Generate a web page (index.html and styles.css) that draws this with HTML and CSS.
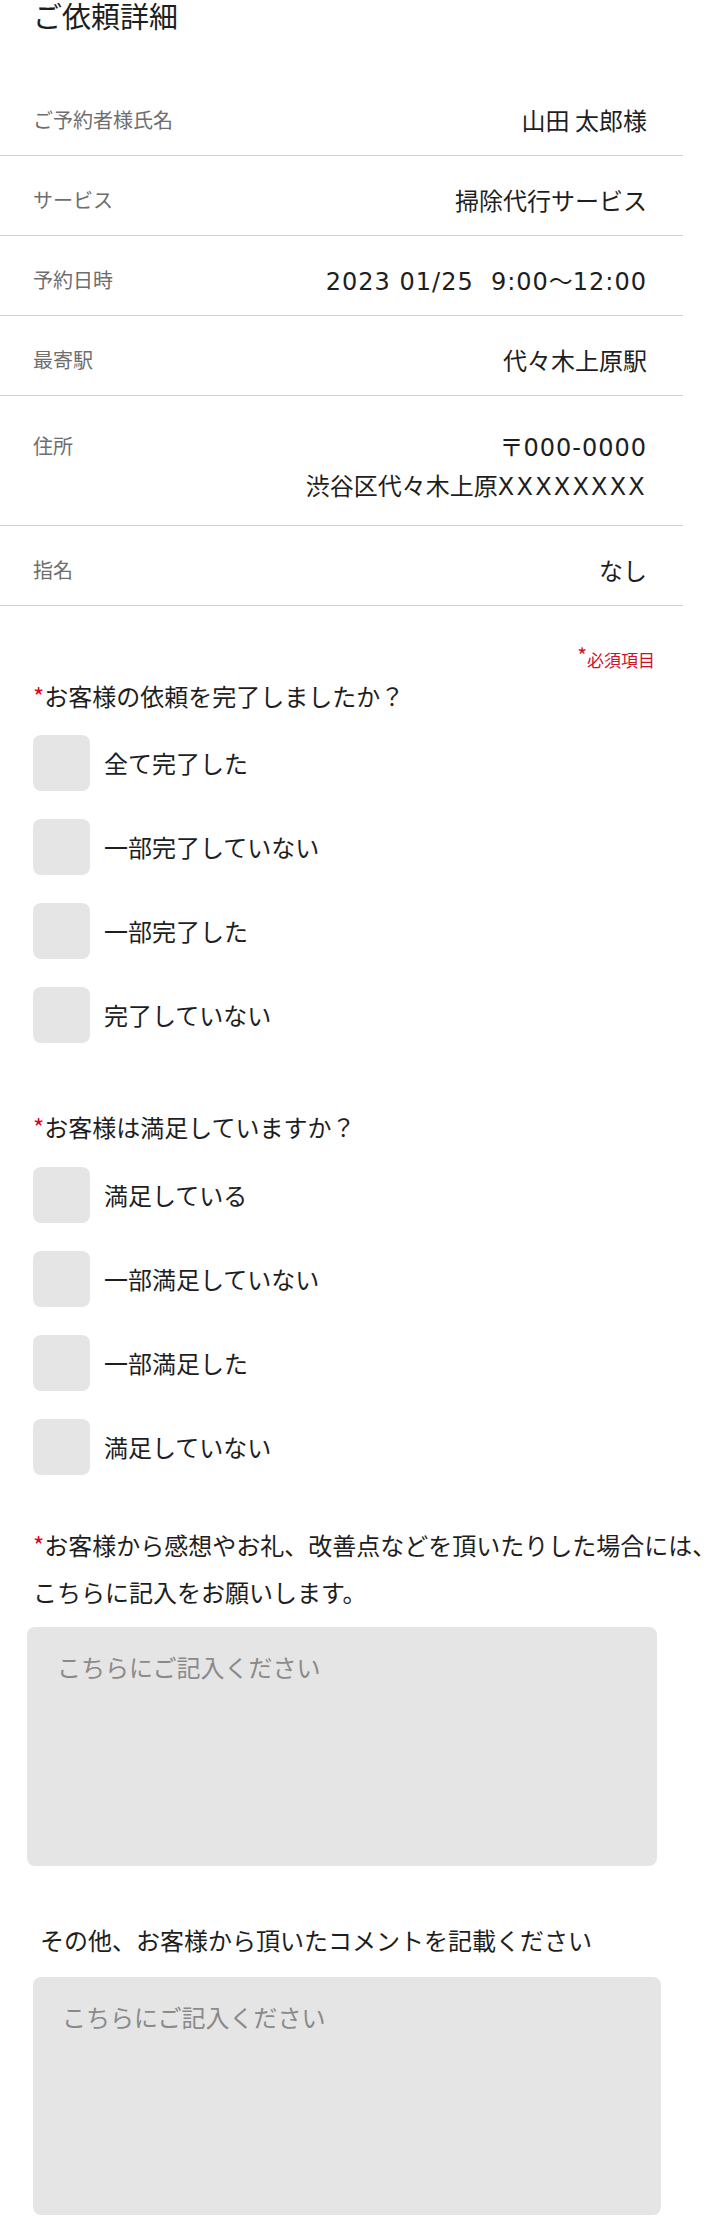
FILE: index.html
```html
<!DOCTYPE html>
<html lang="ja">
<head>
<meta charset="utf-8">
<title>ご依頼詳細</title>
<link rel="stylesheet" href="styles.css">
</head>
<body>
<h1 class="title">ご依頼詳細</h1>

<div class="details">
  <div class="row">
    <div class="label">ご予約者様氏名</div>
    <div class="value">山田 太郎様</div>
  </div>
  <div class="row">
    <div class="label">サービス</div>
    <div class="value">掃除代行サービス</div>
  </div>
  <div class="row">
    <div class="label">予約日時</div>
    <div class="value"><span class="latin">2023 01/25&nbsp; 9:00</span>〜<span class="latin">12:00</span></div>
  </div>
  <div class="row">
    <div class="label">最寄駅</div>
    <div class="value">代々木上原駅</div>
  </div>
  <div class="row tall">
    <div class="label">住所</div>
    <div class="value">
      <div>〒<span class="latin">000-0000</span></div>
      <div>渋谷区代々木上原<span class="latin wide">XXXXXXXX</span></div>
    </div>
  </div>
  <div class="row">
    <div class="label">指名</div>
    <div class="value">なし</div>
  </div>
</div>

<div class="form">
  <div class="req-note"><span class="mark">*</span>必須項目</div>

  <div class="question q-first"><span class="mark">*</span>お客様の依頼を完了しましたか？</div>
  <div class="options">
    <div class="option"><span class="box"></span><span>全て完了した</span></div>
    <div class="option"><span class="box"></span><span>一部完了していない</span></div>
    <div class="option"><span class="box"></span><span>一部完了した</span></div>
    <div class="option"><span class="box"></span><span>完了していない</span></div>
  </div>

  <div class="question q-second"><span class="mark">*</span>お客様は満足していますか？</div>
  <div class="options">
    <div class="option"><span class="box"></span><span>満足している</span></div>
    <div class="option"><span class="box"></span><span>一部満足していない</span></div>
    <div class="option"><span class="box"></span><span>一部満足した</span></div>
    <div class="option"><span class="box"></span><span>満足していない</span></div>
  </div>

  <div class="question q-third"><span class="mark">*</span>お客様から感想やお礼、改善点などを頂いたりした場合には、<br>こちらに記入をお願いします。</div>
  <div class="memo memo-first"><span class="placeholder">こちらにご記入ください</span></div>

  <div class="question q-fourth">その他、お客様から頂いたコメントを記載ください</div>
  <div class="memo memo-second"><span class="placeholder">こちらにご記入ください</span></div>
</div>
</body>
</html>
```

FILE: styles.css
```css
html, body {
  margin: 0;
  padding: 0;
}

body {
  font-family: "Noto Sans CJK JP", "Noto Sans", sans-serif;
  color: #222222;
  background: #ffffff;
  overflow-x: hidden;
}

.title {
  margin: 0;
  padding: 1px 0 0 33px;
  font-size: 29px;
  line-height: 28px;
  font-weight: 400;
  color: #1e1e1e;
}

.details {
  width: 683px;
  margin-top: 47px;
}

.row {
  display: flex;
  justify-content: space-between;
  align-items: flex-start;
  padding: 30px 36px 21px 33px;
  border-bottom: 1px solid #d2d2d2;
}

.label {
  font-size: 20px;
  line-height: 28px;
  color: #6e6e6e;
}

.value {
  font-size: 24px;
  line-height: 28px;
  text-align: right;
  color: #1e1e1e;
}

.row.tall .label,
.row.tall .value {
  line-height: 39px;
}

.latin {
  font-family: "DejaVu Sans", sans-serif;
  letter-spacing: 1px;
  line-height: 0;
}

.latin.wide {
  letter-spacing: 2.2px;
}

.form {
  padding-left: 33px;
}

.req-note {
  width: 622px;
  margin-top: 42px;
  text-align: right;
  font-size: 17px;
  line-height: 24px;
  color: #d0102a;
}

.req-note .mark {
  font-size: 21px;
  vertical-align: 3px;
  line-height: 0;
}

.question {
  font-size: 24px;
  line-height: 36px;
  color: #1e1e1e;
}

.question .mark {
  color: #e0001b;
}

.q-first {
  margin: 6px 0 21px;
}

.q-second {
  margin: 66px 0 22px;
}

.q-third {
  margin: 46px 0 12px;
  line-height: 47px;
  white-space: nowrap;
}

.q-fourth {
  margin: 56px 0 19px;
  padding-left: 7px;
}

.options {
  display: flex;
  flex-direction: column;
  gap: 28px;
}

.option {
  display: flex;
  align-items: center;
  gap: 14px;
  font-size: 24px;
  line-height: 28px;
  color: #1e1e1e;
}

.box {
  width: 57px;
  height: 56px;
  flex-shrink: 0;
  border-radius: 8px;
  background: #e5e5e5;
}

.memo {
  box-sizing: border-box;
  background: #e5e5e5;
  border-radius: 8px;
  font-size: 24px;
  line-height: 28px;
}

.memo-first {
  margin-left: -6px;
  width: 630px;
  height: 239px;
  padding: 26px 30px;
}

.memo-second {
  width: 628px;
  height: 238px;
  padding: 26px 29px;
}

.placeholder {
  color: #8a8a8a;
}
```
